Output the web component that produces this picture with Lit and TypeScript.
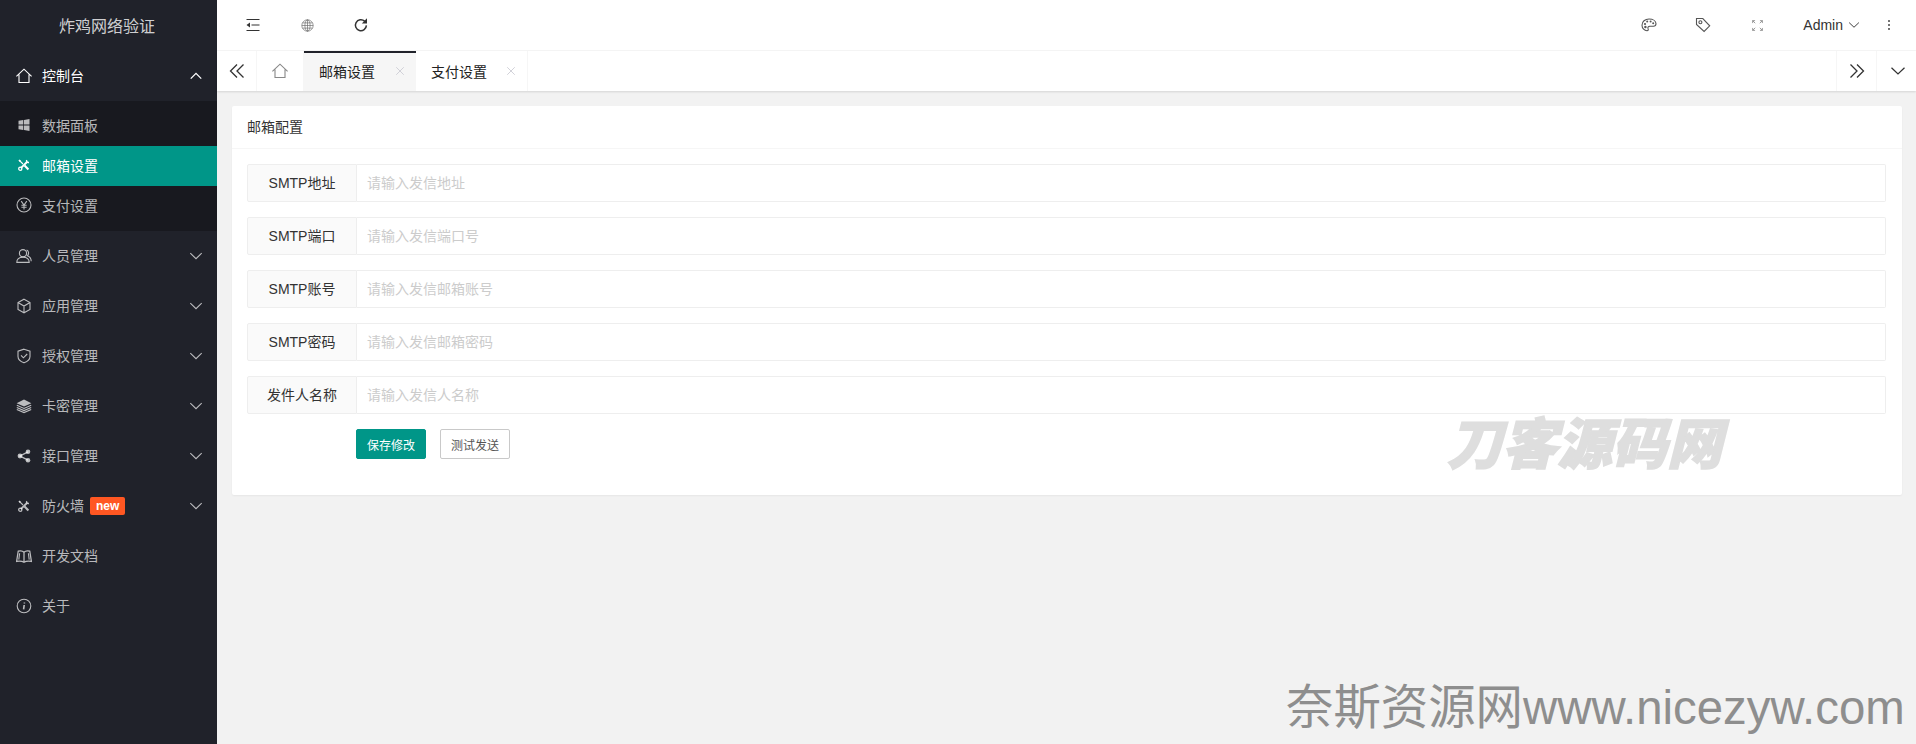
import { LitElement, html, css, svg } from "lit";
import { customElement } from "lit/decorators.js";

const ic = (body: unknown, size = 16) => html`<svg class="ic" width=${size} height=${size} viewBox="0 0 16 16" fill="none" stroke="currentColor" stroke-width="1.1">${body}</svg>`;

const icons: Record<string, unknown> = {
  home: svg`<path d="M.4 8.400 8 1.200l7.600 7.200M3 6.600v7.900h10V6.600"/>`,
  windows: svg`<path fill="currentColor" stroke="none" d="M2.500 3.800 7.300 3v4.600H2.500zM8 2.900l5.500-.9v5.600H8zM2.500 8.400h4.800V13l-4.800-.8zM8 8.400h5.500V14L8 13.100z"/>`,
  tools: svg`<path stroke-width="1.900" d="M4.800 11.200 11 5"/><circle cx="4.300" cy="11.700" r="1.600" stroke-width="1.300"/><path stroke-width="1.500" d="M10.800 3.200c-.6 1 .1 2.400 2.200 2.200"/><path stroke-width="1.100" d="M3.300 3.300 7 7"/><path stroke-width="2.100" d="M8.600 8.600 12.400 12.400"/><path fill="currentColor" stroke="none" d="M2.400 3.600 3.600 2.400 5 3.800 3.800 5z"/>`,
  yuan: svg`<circle cx="8" cy="8" r="7"/><path d="M5.200 4.200 8 8l2.800-3.800M8 8v4.400M5.400 8.300h5.200M5.400 10.200h5.200"/>`,
  user: svg`<circle cx="7" cy="5.200" r="3.600"/><path d="M.8 14.400c0-3.200 2.600-5.200 6.200-5.200s6.200 2 6.200 5.200zM10.600 2c2 .6 2.800 3.800.8 5.800 2 .8 3.800 2.600 3.800 5.400"/>`,
  cube: svg`<path d="M8 1.200 14 4.600v6.800l-6 3.400-6-3.400V4.600zM2 4.600 8 8l6-3.400M8 8v6.800"/>`,
  shield: svg`<path d="M8 1.200 14 3.200v5.200c0 3-2.600 5-6 6.400-3.400-1.400-6-3.400-6-6.400V3.200z"/><path d="M5 7.400 7.400 9.800 11.200 6"/>`,
  layers: svg`<path fill="currentColor" stroke="none" d="M8 1.600 15.400 5.200 8 8.600.6 5.200z"/><path d="M.8 7.200 8 10.400l7.200-3.200M.8 9.400 8 12.600l7.200-3.200M.8 11.400 8 14.600l7.200-3.200"/>`,
  share: svg`<g fill="currentColor" stroke="none"><circle cx="4" cy="8" r="2.400"/><circle cx="12" cy="3.800" r="2.300"/><circle cx="12" cy="12.200" r="2.300"/></g><path stroke-width="1.400" d="M12 3.800 4 8l8 4.200"/>`,
  book: svg`<path stroke-width="1.250" d="M8 4.200C6.600 2.800 4 2.600 2.200 3.200L.6 13.400c2.600-.6 5.400-.4 7.400.8 2-1.200 4.800-1.400 7.400-.8l-1.600-10.200C12 2.600 9.400 2.800 8 4.200zM8 4.200V14"/><path d="M3.600 5.200 2.800 11.600M12.400 5.200l.8 6.400"/>`,
  info: svg`<circle cx="8" cy="8" r="6.800"/><path stroke-width="1.600" d="M8.200 7 7.600 11.400M8.400 4.400v1.200"/>`,
  shrink: svg`<path d="M1.500 2.500h13M1.500 13.500h13M6.500 8h8"/><path fill="currentColor" stroke="none" d="M5 5.400v5.200L1.500 8z"/>`,
  globe: svg`<g stroke-width=".8"><circle cx="8" cy="8" r="7"/><ellipse cx="8" cy="8" rx="3.200" ry="7"/><path d="M8 1v14M1 8h14M1.900 4.800h12.200M1.900 11.200h12.200"/></g>`,
  refresh: svg`<path stroke-width="1.500" d="M13.400 8.400a5.500 5.500 0 1 1-1.800-4.300"/><path fill="currentColor" stroke="none" d="M14 1.200v5.200H8.800z"/>`,
  palette: svg`<path d="M8 2C4 2 1 4.600 1 8.200c0 3.200 2.600 5.600 5 5.600 1.600 0 1.400-1.400 1-2.400-.4-1.200.4-2.200 1.800-2.200h3.600c1.600 0 2.600-1 2.600-2.400C15 4 12 2 8 2z"/><g fill="currentColor" stroke="none"><circle cx="4" cy="7" r="1.100"/><circle cx="6.200" cy="4.600" r="1"/><circle cx="9.600" cy="4.400" r="1"/><circle cx="12.200" cy="6.200" r="1"/><circle cx="4.400" cy="10" r="1.200"/></g>`,
  tag: svg`<path d="M1.500 1.500h6.300l6.900 7.300-5.600 5.700-7.600-7z"/><circle cx="5.400" cy="5.200" r="1.500"/>`,
  full: svg`<path stroke-width=".9" d="M2 5V2h3M2 2l3.200 3.200M14 5V2h-3M14 2l-3.200 3.200M2 11v3h3M2 14l3.200-3.200M14 11v3h-3M14 14l-3.200-3.200"/>`,
  dots: svg`<g fill="currentColor" stroke="none"><rect x="7" y="1.500" width="2" height="2.400"/><rect x="7" y="6.800" width="2" height="2.400"/><rect x="7" y="12.100" width="2" height="2.400"/></g>`,
  down: svg`<path stroke-width="1.250" d="M1.500 4.800 8 11 14.500 4.800"/>`,
  up: svg`<path stroke-width="1.500" d="M2 11 8 5l6 6"/>`,
  left2: svg`<path stroke-width="1.300" d="M8 1.500 1.500 8 8 14.500M14.500 1.500 8 8l6.500 6.500"/>`,
  right2: svg`<path stroke-width="1.300" d="M8 1.500 14.500 8 8 14.500M1.500 1.500 8 8l-6.500 6.500"/>`,
  close: svg`<path stroke-width="1.300" d="M2 2 14 14M14 2 2 14"/>`,
};

const menu = [
  ["user", "人员管理", true],
  ["cube", "应用管理", true],
  ["shield", "授权管理", true],
  ["layers", "卡密管理", true],
  ["share", "接口管理", true],
  ["tools", "防火墙", true, true],
  ["book", "开发文档", false],
  ["info", "关于", false],
] as [string, string, boolean, boolean?][];

const fields = [
  ["SMTP地址", "请输入发信地址"],
  ["SMTP端口", "请输入发信端口号"],
  ["SMTP账号", "请输入发信邮箱账号"],
  ["SMTP密码", "请输入发信邮箱密码"],
  ["发件人名称", "请输入发信人名称"],
];

@customElement("app-root")
export class AppRoot extends LitElement {
  static styles = css`
    :host {
      display: flex;
      position: relative;
      height: 744px;
      overflow: hidden;
      font-family: "Liberation Sans", "Noto Sans CJK SC", sans-serif;
      font-size: 14px;
      color: #333;
      background: #f2f2f2;
    }
    .ic { display: block; flex: none; }
    .side { width: 217px; flex: none; background: #20222a; color: rgba(255,255,255,.7); display: flex; flex-direction: column; }
    .logo { height: 50px; box-sizing: border-box; padding-right: 3px; display: flex; align-items: center; justify-content: center; font-size: 16px; color: rgba(255,255,255,.8); flex: none; }
    .item { height: 50px; flex: none; display: flex; align-items: center; padding: 0 14px 0 16px; gap: 10px; }
    .item.top { height: 51px; color: #fff; }
    .item .name { line-height: 20px; }
    .item .chev { margin-left: auto; }
    .badge { background: #ff5722; color: #fff; font-size: 12px; font-weight: 700; height: 18px; line-height: 18px; padding: 0 6px; border-radius: 2px; margin-left: -4px; }
    .sub { background: #18191f; padding: 5px 0; flex: none; }
    .subitem { height: 40px; box-sizing: border-box; padding-bottom: 2px; display: flex; align-items: center; padding-left: 16px; gap: 10px; }
    .subitem.on { background: #009688; color: #fff; }
    .main { flex: 1; min-width: 0; display: flex; flex-direction: column; }
    .head { height: 50px; flex: none; background: #fff; border-bottom: 1px solid #f6f6f6; display: flex; align-items: center; color: #333; padding-left: 28px; }
    .head .hbtn { width: 16px; display: flex; justify-content: center; margin-right: 38px; }
    .head .hbtn.soft { color: #666; }
    .head .right { margin-left: auto; display: flex; align-items: center; color: #555; }
    .head .right .hi { margin-right: 38px; width: 16px; display: flex; justify-content: center; }
    .head .right .hi.soft { color: #777; }
    .admin { font-size: 14px; color: #333; margin-right: 5px; }
    .admin-wrap { display: flex; align-items: center; margin-right: 23px; color: #333; }
    .dots { margin-right: 21px; color: #333; }
    .tabs { height: 40px; flex: none; background: #fff; display: flex; box-shadow: 0 1px 2px rgba(0,0,0,.12); position: relative; }
    .tabbtn { width: 40px; display: flex; align-items: center; justify-content: center; border-right: 1px solid #f6f6f6; color: #333; box-sizing: border-box; }
    .tabbtn.home { width: 47px; color: #888; }
    .tab { width: 112px; box-sizing: border-box; display: flex; align-items: center; justify-content: space-between; padding: 0 11px 0 15px; border-right: 1px solid #f6f6f6; color: #222; font-size: 14px; position: relative; }
    .tab.on { background: #f6f6f6; border-right: none; }
    .tab.on::after { content: ""; position: absolute; left: 0; right: 0; top: 0; height: 2px; background: #20222a; }
    .tab .x { color: #c8c8d0; }
    .tabs .spacer { flex: 1; }
    .tabbtn.r { border-right: none; border-left: 1px solid #f6f6f6; }
    .tabbtn.last { padding-left: 2px; }
    .body { flex: 1; padding: 15px 14px 15px 15px; }
    .card { background: #fff; border-radius: 2px; box-shadow: 0 1px 2px rgba(0,0,0,.05); }
    .card-head { height: 42px; line-height: 42px; padding: 0 15px; border-bottom: 1px solid #f6f6f6; color: #333; }
    .card-body { padding: 15px 16px 36px 15px; }
    .row { display: flex; height: 38px; margin-bottom: 15px; }
    .row label { width: 110px; box-sizing: border-box; flex: none; background: #fafafa; border: 1px solid #eee; border-radius: 2px 0 0 2px; padding-bottom: 2px; display: flex; align-items: center; justify-content: center; color: #333; }
    .row input { flex: 1; min-width: 0; box-sizing: border-box; border: 1px solid #eee; border-left: none; border-radius: 0 2px 2px 0; padding: 0 0 0 10px; font: inherit; outline: none; background: #fff; }
    .row input::placeholder { color: #ccc; opacity: 1; }
    .btns { display: flex; gap: 14px; padding-left: 109px; }
    .btn { height: 30px; width: 70px; box-sizing: border-box; font-family: inherit; font-size: 12px; border-radius: 2px; border: 1px solid #c9c9c9; background: #fff; color: #555; padding: 0; }
    .btn.pri { background: #009688; border-color: #009688; color: #fff; }
    .wm1 { position: absolute; left: 1447px; top: 406px; font-size: 55px; line-height: 78px; font-weight: 900; font-style: italic; color: #dedede; -webkit-text-stroke: 1.5px #dedede; white-space: nowrap; }
    .wm2 { position: absolute; left: 1286px; top: 681px; font-size: 47.4px; line-height: 54px; color: #8e8e8e; white-space: nowrap; }
  `;

  render() {
    return html`
      <aside class="side">
        <div class="logo">炸鸡网络验证</div>
        <div class="item top">${ic(icons.home)}<span class="name">控制台</span><span class="chev">${ic(icons.up, 14)}</span></div>
        <div class="sub">
          <div class="subitem">${ic(icons.windows)}<span>数据面板</span></div>
          <div class="subitem on">${ic(icons.tools)}<span>邮箱设置</span></div>
          <div class="subitem">${ic(icons.yuan)}<span>支付设置</span></div>
        </div>
        ${menu.map(([i, t, chev, isNew]) => html`
          <div class="item">${ic(icons[i])}<span class="name">${t}</span>
            ${isNew ? html`<span class="badge">new</span>` : ""}
            ${chev ? html`<span class="chev">${ic(icons.down, 14)}</span>` : ""}
          </div>`)}
      </aside>
      <div class="main">
        <header class="head">
          <span class="hbtn">${ic(icons.shrink)}</span>
          <span class="hbtn soft">${ic(icons.globe, 13)}</span>
          <span class="hbtn">${ic(icons.refresh)}</span>
          <div class="right">
            <span class="hi">${ic(icons.palette)}</span>
            <span class="hi">${ic(icons.tag)}</span>
            <span class="hi soft">${ic(icons.full, 13)}</span>
            <div class="admin-wrap"><span class="admin">Admin</span>${ic(icons.down, 12)}</div>
            <span class="dots">${ic(icons.dots, 12)}</span>
          </div>
        </header>
        <nav class="tabs">
          <div class="tabbtn">${ic(icons.left2)}</div>
          <div class="tabbtn home">${ic(icons.home)}</div>
          <div class="tab on"><span>邮箱设置</span><span class="x">${ic(icons.close, 10)}</span></div>
          <div class="tab"><span>支付设置</span><span class="x">${ic(icons.close, 10)}</span></div>
          <div class="spacer"></div>
          <div class="tabbtn r">${ic(icons.right2)}</div>
          <div class="tabbtn r last">${ic(icons.down)}</div>
        </nav>
        <main class="body">
          <section class="card">
            <div class="card-head">邮箱配置</div>
            <div class="card-body">
              ${fields.map(([l, p]) => html`<div class="row"><label>${l}</label><input placeholder=${p} /></div>`)}
              <div class="btns">
                <button class="btn pri">保存修改</button>
                <button class="btn">测试发送</button>
              </div>
            </div>
          </section>
        </main>
      </div>
      <div class="wm1">刀客源码网</div>
      <div class="wm2">奈斯资源网www.nicezyw.com</div>
    `;
  }
}
